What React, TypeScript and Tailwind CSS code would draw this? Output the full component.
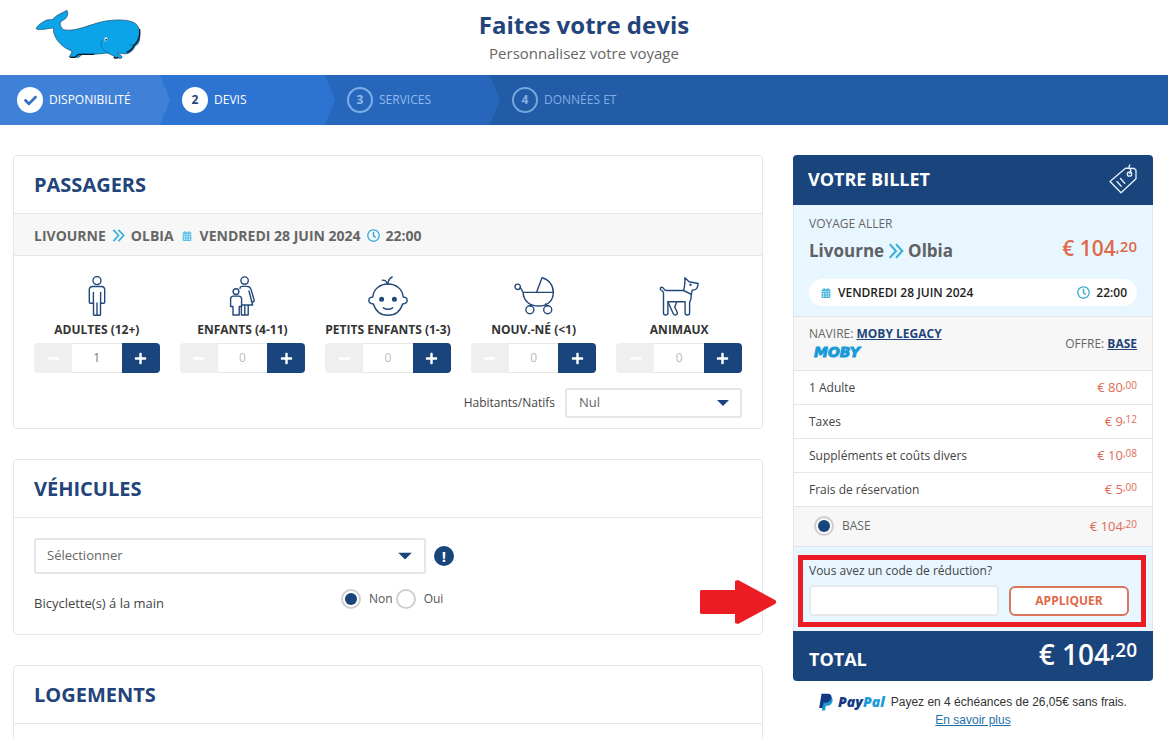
import { useState } from 'react';
import type { ReactNode } from 'react';
import clsx from 'clsx';
import { FaCalendarAlt, FaCheck, FaMinus, FaPlus, FaRegClock } from 'react-icons/fa';

type Passenger = {
    id: string;
    label: string;
    count: number;
    icon: ReactNode;
};

const strokeProps = {
    fill: 'none',
    stroke: '#23487a',
    strokeWidth: 1.4,
    strokeLinecap: 'round' as const,
    strokeLinejoin: 'round' as const,
};

function AdultIcon() {
    return (
        <svg width="40" height="40" viewBox="0 0 40 40" {...strokeProps}>
            <circle cx="20" cy="4.6" r="4" />
            <path d="M16.5 39V27.5H13.2a.9.9 0 0 1-.9-.9V14.2a3.4 3.4 0 0 1 3.4-3.4h8.6a3.4 3.4 0 0 1 3.4 3.4v12.4a.9.9 0 0 1-.9.9h-3.3V39a.6.6 0 0 1-.6.6h-5.8a.6.6 0 0 1-.6-.6Z" transform="translate(0 -.3)" />
            <path d="M16.4 16.5v11M23.6 16.5v11M20 27v12" />
        </svg>
    );
}

function ChildIcon() {
    return (
        <svg width="40" height="40" viewBox="0 0 40 40" {...strokeProps}>
            <circle cx="22.6" cy="4.6" r="3.7" />
            <circle cx="14" cy="15.6" r="2.9" />
            <path d="M18 12.4c0-1.3 1-2 2.2-2h4.8c2.4 0 3.4 1 4 3l3.2 10.8c.3 1-.6 1.7-1.7 1.5" />
            <path d="M27 15l3.6 14H19.5" />
            <path d="M8.6 30.5V23c0-1.9 1-2.9 2.9-2.9h5.2c1.9 0 2.9 1 2.9 2.9v7.5h-2.4V39h-6.2v-8.5Z" />
            <path d="M19.4 31v8h6.8V29.5M22.8 29.5V39" />
        </svg>
    );
}

function ToddlerIcon() {
    return (
        <svg width="40" height="40" viewBox="0 0 40 40" {...strokeProps}>
            <path d="M4.8 21C5.500 13 12 8 20 8s14.500 5 15.200 13c2.400.2 4 1.500 4 3.300s-1.700 3.400-4.600 3.700C32.500 35 27 39.300 20 39.300S7.500 35 5.400 28C2.500 27.700.8 26.100.8 24.300s1.600-3.100 4-3.300Z" />
            <path d="M19.500 8c-.8-2.500-2.600-4-5.200-3.900M20 8c0-3.500 1.400-5.800 4.200-7" />
            <path d="M15.300 31.800c2.800 1.800 6.600 1.800 9.400 0" />
            <circle cx="13.6" cy="23.2" r="1.8" fill="#23487a" />
            <circle cx="26.4" cy="23.2" r="1.8" fill="#23487a" />
        </svg>
    );
}

function StrollerIcon() {
    return (
        <svg width="40" height="40" viewBox="0 0 40 40" {...strokeProps}>
            <circle cx="3.7" cy="10.8" r="2.7" />
            <path d="M6.400 11.500l2.700 4.900h30.200c0 8-5.500 13.600-14.500 13.600S9.500 25 9.100 16.400" />
            <path d="M22.500 16.400L28 1.800c6.600 1.600 11.300 7.200 11.300 14.600" />
            <circle cx="15.9" cy="33.8" r="4" />
            <circle cx="33.7" cy="33.8" r="4" />
            <path d="M17.500 29l-1 1M31.500 28l1.500 2" />
        </svg>
    );
}

function DogIcon() {
    return (
        <svg width="40" height="40" viewBox="0 0 40 40" {...strokeProps}>
            <path d="M24.500 14.500H7c-2 0-2.200-3.200-4.200-3.200-2 0-2 2.500-.4 3 1.200.4 2.100 1.200 2.100 3V37c0 1.500 1 2 2.200 2s2.200-.6 2.200-2V25.800h17.200V37c0 1.500 1 2 2.200 2s2.300-.6 2.300-2V26c1.200-1.400 1.700-4 1.700-7.500" />
            <path d="M24.500 14.500c1.300-4 1.500-8 1.400-12.800l4.200 4 9 1.800c-.4 4.800-1.500 6.500-6 6.800l-.8 4-7.800-3.800Z" />
            <path d="M9 26l5.200 11.500c.7 1.500 2 1.800 3.200 1.200 1.200-.6 1.200-1.800.6-3l-2.300-4.400 2-5.300" />
            <circle cx="31.5" cy="8.8" r=".5" />
        </svg>
    );
}

function WhaleLogo() {
    return (
        <svg width="120" height="60" viewBox="0 0 360 180" aria-label="Moby">
            <path
                d="M18 71C24 60 36 51 50 45c8-1 14 0 20-3 6-10 20-14 40-26 6 6 3 17-2 23-6 7-15 8-17 14-2 7 3 15 9 21 30 6 60-7 92-17 40-14 91-16 116-6 20 8 23 29 21 50-1 12-7 19-14 22-4 12-13 20-23 23-14 2-20-3-30-2 4 4 12 5 14 12 0 5-6 5-11 3-15-4-22-12-34-15-16 2-48 6-72 3-5 3-8 6-13 10-10-1-20 1-29-1 4-5 8-12 9-18-25-8-46-28-53-50-4-10-2-14-2-19-15 0-38 9-53 2Z"
                fill="#0ba4e9"
                stroke="#15425f"
                strokeWidth="2"
            />
            <path d="M329 72c2 20-4 38-17 49-4 11-13 18-22 21M251 157c5 3 10 3 13 0M121 157h13l12-9h46" fill="none" stroke="#101820" strokeWidth="4" />
            <path d="M215 105c-6 16 1 30 20 38M297 120c8 1 13-1 17-3" fill="none" stroke="#15628f" strokeWidth="2" />
            <ellipse cx="228" cy="103" rx="4.5" ry="6.5" fill="#fff" />
            <circle cx="229" cy="104" r="3" fill="#222" />
        </svg>
    );
}

function TagIcon() {
    return (
        <svg width="28" height="30" viewBox="0 0 28 30" fill="none" stroke="#e8f3fb" strokeWidth="1.3" strokeLinejoin="round" strokeLinecap="round">
            <path d="M1 17.500L16.500 4.200l8.800.3 1.700 1.700v8.600L12 28.800Z" />
            <circle cx="20.5" cy="10" r="2.2" />
            <path d="M20.500 9.500c2.300-2 1.500-4-.2-5.200-.6-1.200-.4-2.300.5-3.300M8 17.500l4.200 4.700M11.500 14.500l4.200 4.700" />
        </svg>
    );
}

function DoubleChevron({ className }: { className: string }) {
    return (
        <svg className={className} viewBox="0 0 14 14" fill="none" stroke="#35aed8" strokeWidth="1.8">
            <path d="M1.500 1l5.500 6-5.500 6M7 1l5.500 6L7 13" />
        </svg>
    );
}

function PaypalMark() {
    return (
        <svg width="14" height="18" viewBox="0 0 14 18" aria-hidden="true">
            <path d="M5 4h7.200c1.600 1.200 1.700 3.300 1 5.200-.8 2.500-2.800 3.600-5.400 3.600H6.900L6 17.500H2.800Z" fill="#1c9ad6" />
            <path d="M2.500.8h6.200c3 0 4.300 1.700 3.700 4.300-.7 3.300-3 4.700-6.200 4.700H4.600L3.500 15H.2Z" fill="#123984" />
        </svg>
    );
}

function Caret({ className }: { className: string }) {
    return (
        <svg className={clsx('pointer-events-none absolute top-1/2 -translate-y-1/2', className)} viewBox="0 0 14 7">
            <path d="M0 0h14L7 7Z" fill="#19447c" />
        </svg>
    );
}

function Price({ units, cents, className, supClassName }: { units: string; cents: string; className: string; supClassName: string }) {
    return (
        <span className={clsx('flex items-start whitespace-nowrap', className)}>
            <span>€ {units}</span>
            <span className={supClassName}>,{cents}</span>
        </span>
    );
}

function Card({ title, children }: { title: string; children?: ReactNode }) {
    return (
        <section className="rounded border border-[#e6e6e6] bg-white">
            <h2 className="border-b border-[#e6e6e6] px-5 py-4 text-[20px] leading-[25px] font-bold text-[#23447a]">{title}</h2>
            {children}
        </section>
    );
}

const radioClass =
    'size-5 shrink-0 appearance-none rounded-full border-2 border-[#cfcfcf] bg-white bg-clip-content p-[2px] checked:bg-[#19447c]';

const initialPassengers: Passenger[] = [
    { id: 'adults', label: 'ADULTES (12+)', count: 1, icon: <AdultIcon /> },
    { id: 'children', label: 'ENFANTS (4-11)', count: 0, icon: <ChildIcon /> },
    { id: 'toddlers', label: 'PETITS ENFANTS (1-3)', count: 0, icon: <ToddlerIcon /> },
    { id: 'newborns', label: 'NOUV.-NÉ (<1)', count: 0, icon: <StrollerIcon /> },
    { id: 'pets', label: 'ANIMAUX', count: 0, icon: <DogIcon /> },
];

const costs = [
    { label: '1 Adulte', units: '80', cents: '00' },
    { label: 'Taxes', units: '9', cents: '12' },
    { label: 'Suppléments et coûts divers', units: '10', cents: '08' },
    { label: 'Frais de réservation', units: '5', cents: '00' },
];

const chevronClip = '[clip-path:polygon(0_0,calc(100%-10px)_0,100%_50%,calc(100%-10px)_100%,0_100%)]';

function Steps() {
    return (
        <nav className="bg-[#225ba6]">
            <ol className="flex h-[50px] text-[12px]">
                <li className={clsx('z-30 flex w-[170px] items-center gap-[6px] bg-[#4081d8] pl-[17px] text-white', chevronClip)}>
                    <span className="flex size-[26px] items-center justify-center rounded-full bg-white text-[#2f6fc4]">
                        <FaCheck size={13} />
                    </span>
                    DISPONIBILITÉ
                </li>
                <li className={clsx('z-20 -ml-[10px] flex w-[175px] items-center gap-[6px] bg-[#2d73d2] pl-[22px] text-white', chevronClip)}>
                    <span className="flex size-[26px] items-center justify-center rounded-full bg-white font-bold text-[#23447a]">2</span>
                    DEVIS
                </li>
                <li className={clsx('z-10 -ml-[10px] flex w-[175px] items-center gap-[6px] bg-[#2767bb] pl-[22px] text-[#8fbaf0]', chevronClip)}>
                    <span className="flex size-[26px] items-center justify-center rounded-full border-2 border-[#7fafea] font-bold">3</span>
                    SERVICES
                </li>
                <li className="-ml-[10px] flex items-center gap-[6px] pl-[22px] text-[#82aee3]">
                    <span className="flex size-[26px] items-center justify-center rounded-full border-2 border-[#78a6de] font-bold">4</span>
                    DONNÉES ET
                </li>
            </ol>
        </nav>
    );
}

function Passengers() {
    const [passengers, setPassengers] = useState(initialPassengers);

    const changeCount = (id: string, step: number) => {
        setPassengers((list) => list.map((p) => (p.id === id ? { ...p, count: Math.max(0, p.count + step) } : p)));
    };

    return (
        <Card title="PASSAGERS">
            <div className="flex items-center border-b border-[#e6e6e6] bg-[#f7f7f7] px-5 pt-[11px] pb-[9px] text-[14px] leading-[21px] font-bold text-[#666]">
                LIVOURNE
                <DoubleChevron className="mx-[6px] size-[13px]" />
                OLBIA
                <FaCalendarAlt className="mx-2 text-[#5cc3e8]" size={10} />
                VENDREDI 28 JUIN 2024
                <FaRegClock className="mx-[6px] text-[#2fa9d6]" size={13} />
                22:00
            </div>
            <div className="grid grid-cols-5 gap-5 px-5 pt-5">
                {passengers.map((p) => (
                    <div key={p.id} className="flex flex-col items-center">
                        {p.icon}
                        <label htmlFor={p.id} className="pt-[5px] text-[12px] leading-[18px] font-bold whitespace-nowrap text-[#333]">
                            {p.label}
                        </label>
                        <div className="mt-1 flex h-[30px] w-full overflow-hidden rounded">
                            <button aria-label="Retirer" onClick={() => changeCount(p.id, -1)} className="flex w-[38px] items-center justify-center bg-[#efefef] text-white">
                                <FaMinus size={13} />
                            </button>
                            <input
                                id={p.id}
                                value={p.count}
                                readOnly
                                className={clsx('w-0 flex-1 border-y border-[#e6e6e6] bg-white text-center text-[12px]', p.count > 0 ? 'text-[#777]' : 'text-[#bbb]')}
                            />
                            <button aria-label="Ajouter" onClick={() => changeCount(p.id, 1)} className="flex w-[38px] items-center justify-center bg-[#19447c] text-white">
                                <FaPlus size={13} />
                            </button>
                        </div>
                    </div>
                ))}
            </div>
            <div className="flex items-center justify-end gap-[10px] px-5 pt-[15px] pb-[10px]">
                <label htmlFor="natives" className="text-[12px] text-[#444]">Habitants/Natifs</label>
                <div className="relative w-[177px]">
                    <select id="natives" className="h-[30px] w-full appearance-none rounded-[3px] border-2 border-[#e6e6e6] bg-white pl-3 text-[13px] text-[#666]">
                        <option>Nul</option>
                    </select>
                    <Caret className="right-[13px] h-[6px] w-3" />
                </div>
            </div>
        </Card>
    );
}

function Vehicles() {
    return (
        <Card title="VÉHICULES">
            <div className="px-5 pt-5 pb-[21px]">
                <div className="flex items-center gap-2">
                    <div className="relative w-[392px]">
                        <select aria-label="Véhicule" className="h-9 w-full appearance-none rounded-[3px] border-2 border-[#e6e6e6] bg-white pl-[11px] text-[13px] text-[#666]">
                            <option>Sélectionner</option>
                        </select>
                        <Caret className="right-[14px] h-[7px] w-[14px]" />
                    </div>
                    <button aria-label="Informations" className="flex size-5 items-center justify-center rounded-full bg-[#19447c] text-[15px] font-bold text-white">!</button>
                </div>
                <div role="radiogroup" aria-labelledby="bike-label" className="flex items-start pt-[15px] text-[12px] text-[#555]">
                    <span id="bike-label" className="w-[307px] pt-1 text-[13px] leading-5 text-[#444]">Bicyclette(s) á la main</span>
                    <label className="flex items-center gap-2 leading-5">
                        <input type="radio" name="bike" defaultChecked className={radioClass} />
                        Non
                    </label>
                    <label className="ml-[3px] flex items-center gap-2 leading-5">
                        <input type="radio" name="bike" className={radioClass} />
                        Oui
                    </label>
                </div>
            </div>
        </Card>
    );
}

function Ticket() {
    return (
        <aside className="w-[360px] shrink-0">
            <header className="flex h-[50px] items-center justify-between rounded-t bg-[#19447c] pr-4 pb-[2px] pl-[15px] text-white">
                <h2 className="text-[18px] font-bold">VOTRE BILLET</h2>
                <TagIcon />
            </header>
            <div className="border-x border-[#e0e4e8] text-[12px] text-[#444]">
                <div className="border-b border-[#e0e4e8] bg-[#e8f7ff] px-[15px] pt-[10px] pb-[10px]">
                    <p className="leading-[18px] text-[#666]">VOYAGE ALLER</p>
                    <div className="flex h-[34px] items-center justify-between">
                        <p className="flex items-center pt-[2px] text-[17px] font-bold text-[#5f6163]">
                            Livourne
                            <DoubleChevron className="mx-1 size-4" />
                            Olbia
                        </p>
                        <Price units="104" cents="20" className="pb-1 text-[21px] leading-[26px] font-semibold text-[#e0694b]" supClassName="text-[15px] leading-[22px]" />
                    </div>
                    <div className="mt-3 flex h-[27px] items-center rounded-full bg-white pr-[10px] pl-3 font-semibold text-[#222]">
                        <FaCalendarAlt className="mr-[7px] text-[#48b6de]" size={10} />
                        VENDREDI 28 JUIN 2024
                        <FaRegClock className="mr-[6px] ml-auto text-[#2fa9d6]" size={13} />
                        22:00
                    </div>
                </div>
                <div className="flex h-[54px] items-center justify-between border-b border-[#e0e4e8] bg-[#f7f7f7] px-[15px] text-[#666]">
                    <div className="pb-[2px]">
                        <p className="leading-[18px]">
                            NAVIRE: <a href="#navire" className="font-bold text-[#23447a] underline">MOBY LEGACY</a>
                        </p>
                        <p className="pl-[5px] font-['DejaVu_Sans',sans-serif] text-[14px] leading-[18px] font-bold text-[#1a9bd8] italic [-webkit-text-stroke:1px_#1a9bd8]">MOBY</p>
                    </div>
                    <p>
                        OFFRE: <a href="#offre" className="font-bold text-[#23447a] underline">BASE</a>
                    </p>
                </div>
                <ul>
                    {costs.map((cost) => (
                        <li key={cost.label} className="flex h-[34px] items-center justify-between border-b border-[#e6e6e6] px-[15px]">
                            {cost.label}
                            <Price units={cost.units} cents={cost.cents} className="pb-[2px] text-[13px] leading-5 text-[#dd6b55]" supClassName="text-[10px] leading-4" />
                        </li>
                    ))}
                </ul>
                <div className="flex h-10 items-center justify-between border-b border-[#e0e4e8] bg-[#f7f7f7] pr-[15px] pb-[2px] pl-5 text-[#666]">
                    <label className="flex items-center gap-2">
                        <input type="radio" name="offer" defaultChecked className={radioClass} />
                        BASE
                    </label>
                    <Price units="104" cents="20" className="text-[13px] leading-5 text-[#dd6b55]" supClassName="text-[10px] leading-4" />
                </div>
                <form className="relative bg-[#e8f7ff] px-[15px] pt-[14px] pb-[15px]" onSubmit={(e) => e.preventDefault()}>
                    <label htmlFor="discount" className="block leading-5">Vous avez un code de réduction?</label>
                    <div className="mt-1 flex items-center gap-[10px]">
                        <input id="discount" className="h-[31px] w-[190px] rounded border-2 border-[#e6e9ec] bg-white px-2" />
                        <button className="h-[30px] w-[120px] rounded-md border-2 border-[#d9765c] bg-white font-bold text-[#e0694b]">APPLIQUER</button>
                    </div>
                    {/* highlight drawn over the discount field */}
                    <div className="pointer-events-none absolute top-2 right-[6px] bottom-1 left-1 border-[5px] border-[#ec1c24]" />
                    <svg className="pointer-events-none absolute top-8 -left-[94px]" width="76" height="46" viewBox="0 0 76 46">
                        <path d="M1 11h34V2l3-1 37 20c1.500 1 1.500 3 0 4L38 45l-3-1v-9H1l-1-1V12Z" fill="#ec1c24" />
                    </svg>
                </form>
            </div>
            <footer className="flex h-[50px] items-center justify-between rounded-b bg-[#19447c] px-4 text-white">
                <span className="pt-[6px] text-[18px] font-bold">TOTAL</span>
                <Price units="104" cents="20" className="pb-1 text-[28px] leading-9 font-semibold" supClassName="text-[19px] leading-7" />
            </footer>
            <div className="pt-3 text-center font-['Liberation_Sans',Arial,sans-serif] text-[12px] leading-[18px] text-[#333]">
                <p className="flex items-center justify-center">
                    <PaypalMark />
                    <span className="ml-[5px] font-['Open_Sans',sans-serif] text-[14px] font-extrabold text-[#123984] italic">
                        Pay<span className="text-[#1c9ad6]">Pal</span>
                    </span>
                    <span className="ml-[6px]">Payez en 4 échéances de 26,05€ sans frais.</span>
                </p>
                <a href="#paypal" className="text-[#1f6fa8] underline">En savoir plus</a>
            </div>
        </aside>
    );
}

export default function App() {
    return (
        <div className="min-h-screen bg-white font-['Open_Sans',sans-serif]">
            <header className="grid h-[75px] grid-cols-[1fr_auto_1fr] items-center">
                <div className="pb-[5px] pl-[30px]">
                    <WhaleLogo />
                </div>
                <div className="pb-[2px] text-center">
                    <h1 className="text-[24px] leading-8 font-bold text-[#23447a]">Faites votre devis</h1>
                    <p className="text-[15px] leading-6 text-[#666]">Personnalisez votre voyage</p>
                </div>
            </header>
            <Steps />
            <main className="flex items-start gap-[30px] pt-[30px] pr-[15px] pl-[13px]">
                <div className="flex min-w-0 flex-1 flex-col gap-[30px]">
                    <Passengers />
                    <Vehicles />
                    <Card title="LOGEMENTS">
                        <div className="h-4" />
                    </Card>
                </div>
                <Ticket />
            </main>
        </div>
    );
}
